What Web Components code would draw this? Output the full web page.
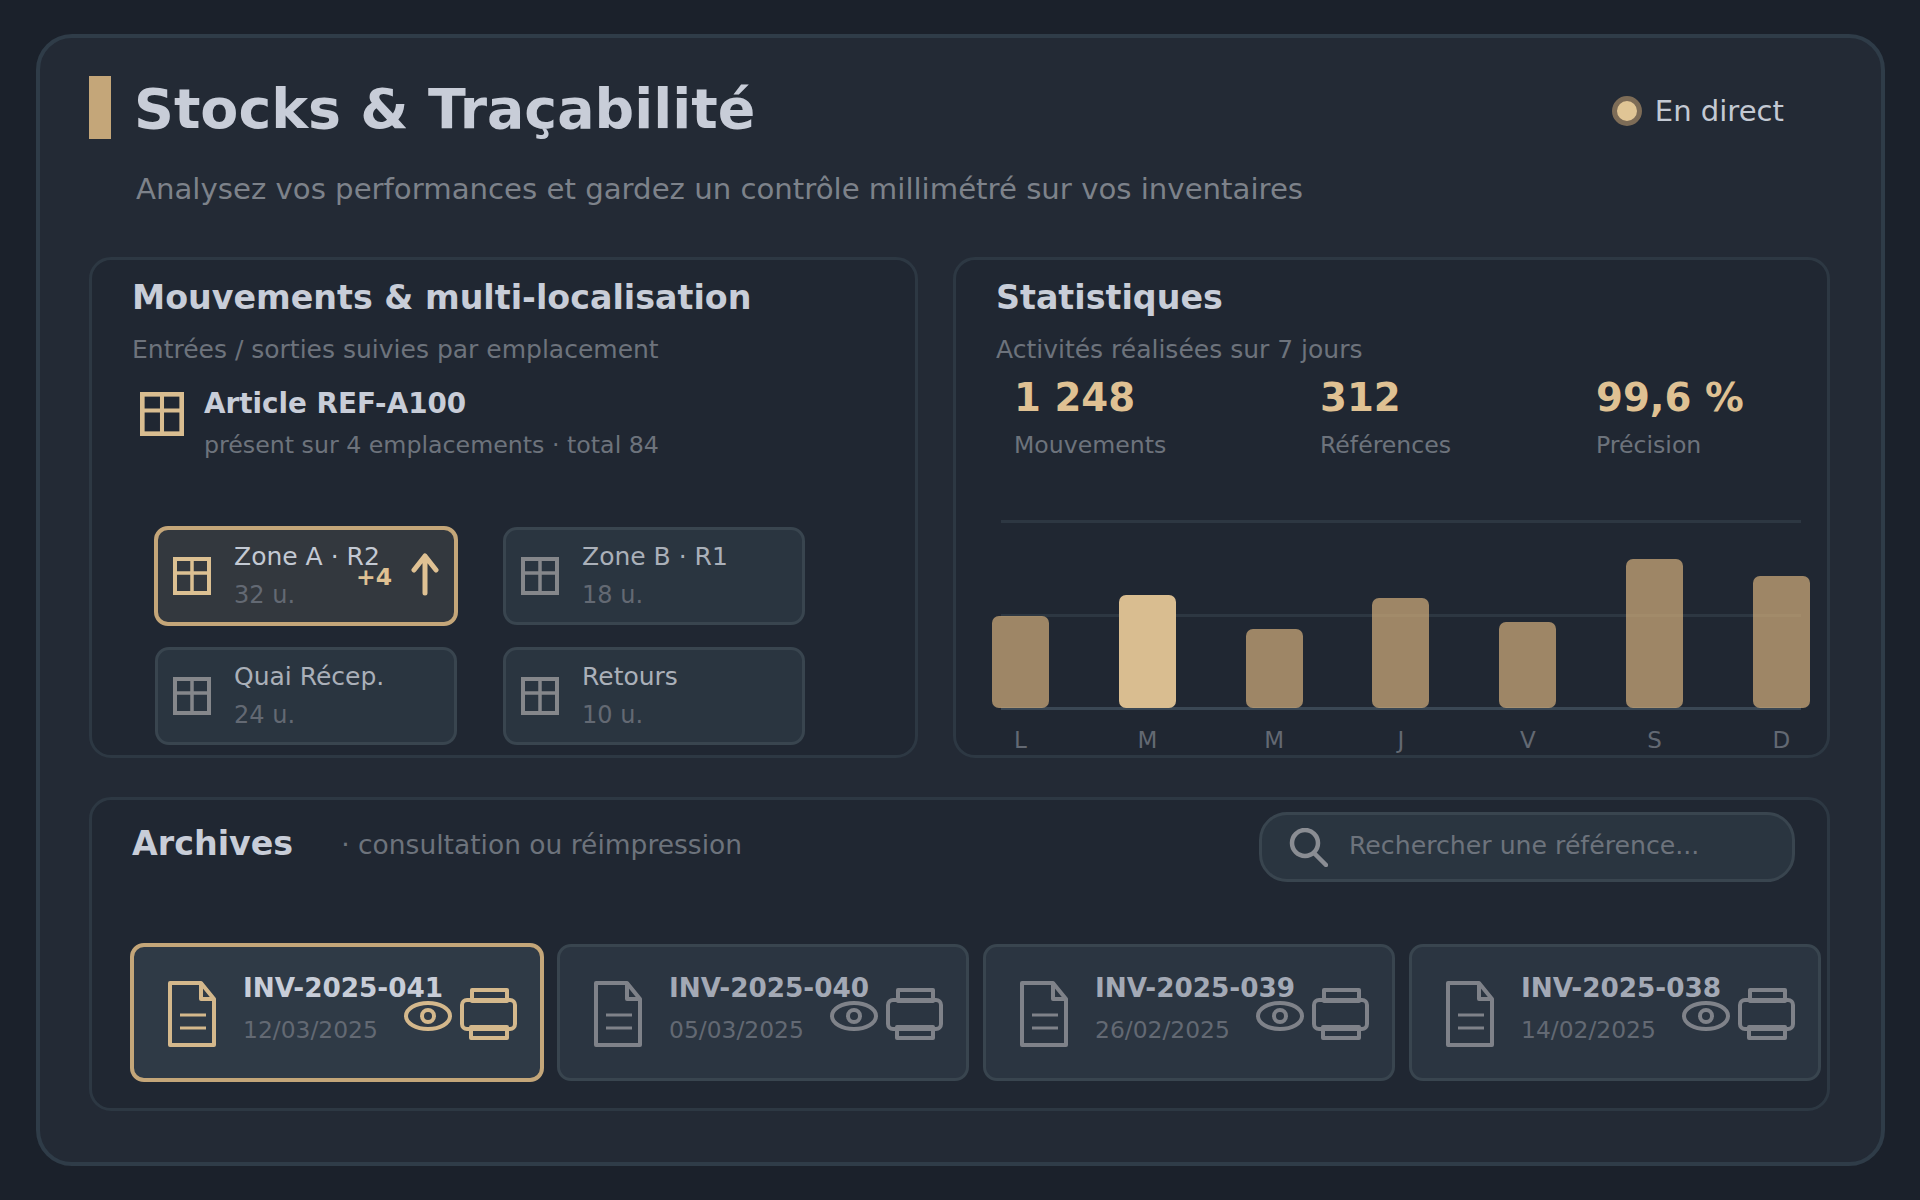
<!DOCTYPE html>
<html lang="fr">
<head>
<meta charset="utf-8">
<title>Stocks &amp; Traçabilité</title>
<style>
  html, body { margin: 0; height: 100%; }
  body {
    background: #1b212b;
    font-family: "DejaVu Sans", sans-serif;
    color: #c8cdd8;
  }
</style>
</head>
<body>
<stock-dashboard>
  <live-badge slot="badge">En direct</live-badge>

  <panel-card slot="move" heading="Mouvements &amp; multi-localisation" sub="Entrées / sorties suivies par emplacement">
    <article-row name="Article REF-A100" detail="présent sur 4 emplacements · total 84"></article-row>
    <zone-grid>
      <zone-tile name="Zone A · R2" qty="32 u." active delta="+4"></zone-tile>
      <zone-tile name="Zone B · R1" qty="18 u."></zone-tile>
      <zone-tile name="Quai Récep." qty="24 u."></zone-tile>
      <zone-tile name="Retours" qty="10 u."></zone-tile>
    </zone-grid>
  </panel-card>

  <panel-card slot="stats" heading="Statistiques" sub="Activités réalisées sur 7 jours">
    <stat-row>
      <stat-item value="1 248" label="Mouvements"></stat-item>
      <stat-item value="312" label="Références"></stat-item>
      <stat-item value="99,6 %" label="Précision"></stat-item>
    </stat-row>
    <bar-chart>
      <chart-bar h="92" label="L"></chart-bar>
      <chart-bar h="113" label="M" active></chart-bar>
      <chart-bar h="79" label="M"></chart-bar>
      <chart-bar h="110" label="J"></chart-bar>
      <chart-bar h="86" label="V"></chart-bar>
      <chart-bar h="149" label="S"></chart-bar>
      <chart-bar h="132" label="D"></chart-bar>
    </bar-chart>
  </panel-card>

  <archive-panel slot="archives">
    <archive-card ref-id="INV-2025-041" date="12/03/2025" active></archive-card>
    <archive-card ref-id="INV-2025-040" date="05/03/2025"></archive-card>
    <archive-card ref-id="INV-2025-039" date="26/02/2025"></archive-card>
    <archive-card ref-id="INV-2025-038" date="14/02/2025"></archive-card>
  </archive-panel>
</stock-dashboard>

<script>
  const ICONS = {
    grid: `<svg viewBox="0 0 38 38" fill="none" stroke="currentColor" stroke-width="4"><rect x="2" y="2" width="34" height="34"/><path d="M19 2V36M2 16H36" stroke-width="3.5"/></svg>`,
    doc: `<svg viewBox="0 0 48 66" fill="none" stroke="currentColor" stroke-width="4" stroke-linejoin="round"><path d="M2 2H33L46 18V64H2Z"/><path d="M33 2V18H46"/><path d="M12 34H38M12 47H38" stroke-width="3"/></svg>`,
    eye: `<svg viewBox="0 0 48 30" fill="none" stroke="currentColor"><ellipse cx="24" cy="15" rx="22" ry="13" stroke-width="4"/><circle cx="24" cy="15" r="6" stroke-width="4"/></svg>`,
    printer: `<svg viewBox="0 0 57 52" fill="none" stroke="currentColor" stroke-width="4" stroke-linejoin="round"><rect x="12" y="2" width="35" height="11"/><rect x="2" y="12" width="53" height="29" rx="5"/><rect x="11" y="39" width="36" height="11"/></svg>`,
    search: `<svg viewBox="0 0 39 39" fill="none" stroke="currentColor" stroke-width="4.5" stroke-linecap="round"><circle cx="16" cy="15" r="13"/><path d="M26 26L37 37"/></svg>`,
    arrow: `<svg viewBox="0 0 28 44" fill="none" stroke="currentColor" stroke-width="5" stroke-linecap="round" stroke-linejoin="round"><path d="M14 41V4M3 18L14 4L25 18"/></svg>`
  };

  class StockDashboard extends HTMLElement {
    constructor() {
      super();
      this.attachShadow({ mode: 'open' });
      this.shadowRoot.innerHTML = `
        <style>
          :host { display: block; padding: 34px 35px 0 36px; }
          .shell {
            box-sizing: border-box;
            width: 1849px;
            height: 1132px;
            padding: 38px 51px 0 49px;
            background: #232a35;
            border: 4px solid #2f3c48;
            border-radius: 36px;
          }
          .top { display: flex; align-items: center; height: 63px; }
          .accent { width: 22px; height: 63px; background: #c4a679; flex: none; }
          h1 { margin: 4px 0 0 23px; font-size: 55.4px; line-height: 63px; font-weight: 700; color: #c8cdd8; }
          .badge { margin: 7px 46px 0 auto; }
          p { margin: 33px 0 51px 47px; font-size: 29.2px; line-height: 34px; color: #7d828a; }
          .row { display: grid; grid-template-columns: 829px 877px; gap: 35px; height: 501px; }
          .bottom { margin-top: 39px; height: 314px; }
        </style>
        <div class="shell">
          <div class="top">
            <div class="accent"></div>
            <h1>Stocks &amp; Traçabilité</h1>
            <div class="badge"><slot name="badge"></slot></div>
          </div>
          <p>Analysez vos performances et gardez un contrôle millimétré sur vos inventaires</p>
          <div class="row">
            <slot name="move"></slot>
            <slot name="stats"></slot>
          </div>
          <div class="bottom"><slot name="archives"></slot></div>
        </div>
      `;
    }
  }

  class LiveBadge extends HTMLElement {
    constructor() {
      super();
      this.attachShadow({ mode: 'open' });
      this.shadowRoot.innerHTML = `
        <style>
          :host { display: flex; align-items: center; gap: 13px; font-size: 29.1px; color: #c3c9d3; }
          .dot { width: 20px; height: 20px; border-radius: 50%; background: #e0c595; border: 5px solid #7d6c57; }
        </style>
        <div class="dot"></div><slot></slot>
      `;
    }
  }

  class PanelCard extends HTMLElement {
    constructor() {
      super();
      this.attachShadow({ mode: 'open' });
      this.shadowRoot.innerHTML = `
        <style>
          :host {
            display: block;
            box-sizing: border-box;
            height: 501px;
            padding: 19px 0 0 40px;
            background: #202732;
            border: 3px solid #2d3843;
            border-radius: 22px;
          }
          h2 { margin: 0; font-size: 33.3px; line-height: 38px; font-weight: 700; color: #c8cdd8; }
          p { margin: 18px 0 0; font-size: 25px; line-height: 30px; color: #6d737c; }
        </style>
        <h2>${this.getAttribute('heading')}</h2>
        <p>${this.getAttribute('sub')}</p>
        <slot></slot>
      `;
    }
  }

  class ArticleRow extends HTMLElement {
    constructor() {
      super();
      this.attachShadow({ mode: 'open' });
      this.shadowRoot.innerHTML = `
        <style>
          :host { display: flex; margin-top: 23px; }
          .icon { width: 44px; height: 44px; margin: 4px 20px 0 8px; color: #d9bd90; }
          svg { display: block; width: 100%; height: 100%; }
          .name { font-size: 27.8px; line-height: 32px; font-weight: 700; color: #c8cdd8; }
          .detail { margin-top: 10px; font-size: 23.7px; line-height: 30px; color: #6d737c; }
        </style>
        <div class="icon">${ICONS.grid}</div>
        <div>
          <div class="name">${this.getAttribute('name')}</div>
          <div class="detail">${this.getAttribute('detail')}</div>
        </div>
      `;
    }
  }

  class ZoneGrid extends HTMLElement {
    constructor() {
      super();
      this.attachShadow({ mode: 'open' });
      this.shadowRoot.innerHTML = `
        <style>
          :host { display: grid; grid-template-columns: 302px 302px; column-gap: 46px; row-gap: 22px; margin: 67px 0 0 23px; }
        </style>
        <slot></slot>
      `;
    }
  }

  class ZoneTile extends HTMLElement {
    constructor() {
      super();
      this.attachShadow({ mode: 'open' });
      const delta = this.getAttribute('delta');
      this.shadowRoot.innerHTML = `
        <style>
          :host {
            display: flex;
            position: relative;
            box-sizing: border-box;
            align-items: center;
            height: 98px;
            padding-left: 15px;
            background: #2a3540;
            border: 3px solid #39454f;
            border-radius: 14px;
            color: #85878b;
          }
          :host([active]) {
            margin: -1px;
            height: 100px;
            border: 4px solid #c4a679;
            background: #33383e;
            color: #dcc092;
          }
          .icon { width: 38px; height: 38px; margin-right: 23px; flex: none; }
          svg { display: block; width: 100%; height: 100%; }
          .name { font-size: 25px; line-height: 30px; color: #aab0b9; }
          :host([active]) .name { color: #c3c9d3; }
          .qty { margin-top: 8px; font-size: 24px; line-height: 30px; color: #636973; }
          .delta { position: absolute; left: 198px; top: 32px; font-size: 23.5px; line-height: 30px; font-weight: 700; color: #dfc193; }
          .arrow { position: absolute; left: 253px; top: 22px; width: 28px; height: 44px; color: #dfc193; }
        </style>
        <div class="icon">${ICONS.grid}</div>
        <div>
          <div class="name">${this.getAttribute('name')}</div>
          <div class="qty">${this.getAttribute('qty')}</div>
        </div>
        ${delta ? `<div class="delta">${delta}</div><div class="arrow">${ICONS.arrow}</div>` : ''}
      `;
    }
  }

  class StatRow extends HTMLElement {
    constructor() {
      super();
      this.attachShadow({ mode: 'open' });
      this.shadowRoot.innerHTML = `
        <style>
          :host { display: grid; grid-template-columns: 306px 276px auto; margin: 11px 0 0 18px; }
        </style>
        <slot></slot>
      `;
    }
  }

  class StatItem extends HTMLElement {
    constructor() {
      super();
      this.attachShadow({ mode: 'open' });
      this.shadowRoot.innerHTML = `
        <style>
          :host { display: block; }
          .value { font-size: 38.7px; line-height: 44px; font-weight: 700; color: #dfc193; }
          .label { margin-top: 10px; font-size: 23.6px; line-height: 30px; color: #6d737c; }
        </style>
        <div class="value">${this.getAttribute('value')}</div>
        <div class="label">${this.getAttribute('label')}</div>
      `;
    }
  }

  class BarChart extends HTMLElement {
    constructor() {
      super();
      this.attachShadow({ mode: 'open' });
      this.shadowRoot.innerHTML = `
        <style>
          :host {
            display: flex;
            justify-content: space-between;
            width: 818px;
            height: 235px;
            margin: 60px 0 0 -4px;
            background:
              linear-gradient(#2d3742, #2d3742) 9px 0 / 800px 3px no-repeat,
              linear-gradient(#2d3742, #2d3742) 9px 94px / 800px 3px no-repeat,
              linear-gradient(#3a4754, #3a4754) 9px 187px / 800px 3px no-repeat;
          }
        </style>
        <slot></slot>
      `;
    }
  }

  class ChartBar extends HTMLElement {
    constructor() {
      super();
      this.attachShadow({ mode: 'open' });
      this.shadowRoot.innerHTML = `
        <style>
          :host { display: flex; flex-direction: column; align-items: center; width: 57px; }
          .space { flex: 1; }
          .bar { width: 57px; height: ${this.getAttribute('h')}px; background: #d4af7c; opacity: .7; border-radius: 7px; }
          :host([active]) .bar { background: #d9bd90; opacity: 1; }
          .label { height: 47px; line-height: 64px; font-size: 23px; color: #636973; }
        </style>
        <div class="space"></div>
        <div class="bar"></div>
        <div class="label">${this.getAttribute('label')}</div>
      `;
    }
  }

  class ArchivePanel extends HTMLElement {
    constructor() {
      super();
      this.attachShadow({ mode: 'open' });
      this.shadowRoot.innerHTML = `
        <style>
          :host {
            display: block;
            box-sizing: border-box;
            height: 314px;
            padding: 12px 0 0 40px;
            background: #202732;
            border: 3px solid #2d3843;
            border-radius: 22px;
          }
          .head { display: flex; align-items: center; height: 70px; }
          h2 { margin: -6px 0 0; font-size: 33.3px; line-height: 38px; font-weight: 700; color: #c8cdd8; }
          .sub { margin: -4px 0 0 48px; font-size: 26.5px; line-height: 34px; color: #6d737c; }
          .search {
            display: flex;
            align-items: center;
            box-sizing: border-box;
            width: 536px;
            height: 70px;
            margin-left: auto;
            margin-right: 32px;
            padding-left: 27px;
            background: #2a3540;
            border: 3px solid #39454f;
            border-radius: 28px;
            color: #8a8d93;
          }
          .search .icon { width: 39px; height: 39px; margin-right: 21px; }
          svg { display: block; width: 100%; height: 100%; }
          .hint { margin-top: -3px; font-size: 25.2px; color: #6d737c; }
          .cards { display: grid; grid-template-columns: repeat(4, 412px); gap: 14px; margin: 62px 0 0 -1px; }
        </style>
        <div class="head">
          <h2>Archives</h2>
          <div class="sub">· consultation ou réimpression</div>
          <div class="search"><div class="icon">${ICONS.search}</div><span class="hint">Rechercher une référence...</span></div>
        </div>
        <div class="cards"><slot></slot></div>
      `;
    }
  }

  class ArchiveCard extends HTMLElement {
    constructor() {
      super();
      this.attachShadow({ mode: 'open' });
      this.shadowRoot.innerHTML = `
        <style>
          :host {
            display: flex;
            position: relative;
            box-sizing: border-box;
            height: 137px;
            padding: 34px 0 0 34px;
            background: #2b3541;
            border: 3px solid #39454f;
            border-radius: 14px;
            color: #7f8289;
          }
          :host([active]) {
            margin: -1px;
            height: 139px;
            border: 4px solid #c4a679;
            background: #2f3a46;
            color: #d4b88c;
          }
          .doc { width: 48px; height: 66px; margin-right: 27px; flex: none; }
          svg { display: block; width: 100%; height: 100%; }
          .ref { margin-top: -9px; font-size: 26.3px; line-height: 32px; font-weight: 700; color: #a3a9b5; }
          :host([active]) .ref { color: #c8cdd8; }
          .date { margin-top: 11px; font-size: 23.4px; line-height: 30px; color: #636973; }
          .actions { position: absolute; right: 23px; top: 41px; display: flex; align-items: center; gap: 8px; }
          .eye { width: 48px; height: 30px; margin-top: 4px; }
          .printer { width: 57px; height: 52px; }
        </style>
        <div class="doc">${ICONS.doc}</div>
        <div>
          <div class="ref">${this.getAttribute('ref-id')}</div>
          <div class="date">${this.getAttribute('date')}</div>
        </div>
        <div class="actions"><div class="eye">${ICONS.eye}</div><div class="printer">${ICONS.printer}</div></div>
      `;
    }
  }

  customElements.define('stock-dashboard', StockDashboard);
  customElements.define('live-badge', LiveBadge);
  customElements.define('panel-card', PanelCard);
  customElements.define('article-row', ArticleRow);
  customElements.define('zone-grid', ZoneGrid);
  customElements.define('zone-tile', ZoneTile);
  customElements.define('stat-row', StatRow);
  customElements.define('stat-item', StatItem);
  customElements.define('bar-chart', BarChart);
  customElements.define('chart-bar', ChartBar);
  customElements.define('archive-panel', ArchivePanel);
  customElements.define('archive-card', ArchiveCard);
</script>
</body>
</html>
